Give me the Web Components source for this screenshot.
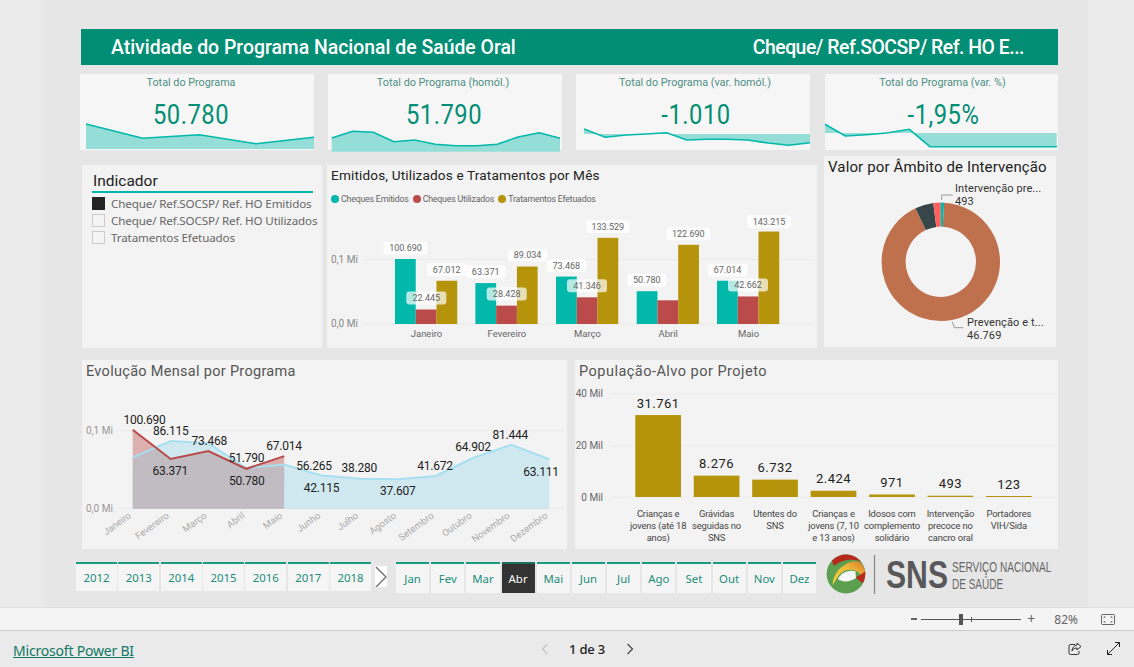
<!DOCTYPE html>
<html lang="pt">
<head>
<meta charset="utf-8">
<title>Atividade do Programa Nacional de Saúde Oral</title>
<style>
    html, body { margin: 0; height: 100%; }
    body { display: flex; flex-direction: column; height: 667px; overflow: hidden; background: #eaeaea;
        font-family: "Noto Sans", "Liberation Sans", sans-serif; }
    .row-kpi { display: grid; grid-template-columns: repeat(4, 234px); gap: 14px; margin-top: 9px; }
    .row-mid { display: grid; grid-template-columns: 240px 490px 234px; column-gap: 5px; margin: 6px 0 0 2px; height: 192px; }
    .row-mid donut-chart { margin-left: 2px; }
    .row-low { display: grid; grid-template-columns: 485px 483px; gap: 8px; margin: 12px 0 0 2px; height: 189px; }
    .row-tiles { display: flex; align-items: flex-start; margin: 12px 0 0 -4px; }
</style>
</head>
<body>
<report-canvas>
    <report-header>
        <span>Atividade do Programa Nacional de Saúde Oral</span>
        <span slot="right">Cheque/ Ref.SOCSP/ Ref. HO E...</span>
    </report-header>
    <div class="row-kpi">
        <kpi-card label="Total do Programa" value="50.780" view="80 74 234 76" style="--lx:-6px;--vx:-6px"
            line="86,124 142.7,138.3 199.3,134.7 256,143.7 314,137.3"
            area="86,124 142.7,138.3 199.3,134.7 256,143.7 314,137.3 314,149 86,149"></kpi-card>
        <kpi-card label="Total do Programa (homól.)" value="51.790" view="328 74 234 76" style="--lx:-2px;--vx:-1px"
            line="331.7,138 352.7,131.3 373.3,132.3 394,141.7 414.7,140 435.3,144.3 456,145.7 476.7,145.7 497.3,144.3 518,137 539.3,132.7 560,138.3"
            area="331.7,138 352.7,131.3 373.3,132.3 394,141.7 414.7,140 435.3,144.3 456,145.7 476.7,145.7 497.3,144.3 518,137 539.3,132.7 560,138.3 560,151.7 331.7,151.7"></kpi-card>
        <kpi-card label="Total do Programa (var. homól.)" value="-1.010" view="576 74 234 76" style="--lx:2px;--vx:3px"
            line="584,129 605.3,137.3 626,135 646,134 666.7,132.7 686.7,140 706.7,139.3 726.7,139.3 747.3,140 768,143 788.7,145.3 810,142.7"
            area="584,129 605.3,137.3 626,135 646,134 666.7,132.7 686.7,140 706.7,139.3 726.7,139.3 747.3,140 768,143 788.7,145.3 810,142.7 810,134 584,134"></kpi-card>
        <kpi-card label="Total do Programa (var. %)" value="-1,95%" view="825 74 233 76" style="--lx:1px;--vx:2px;margin-left:1px"
            line="825,124.3 845.3,136 866,134.7 886.7,133 909.3,129.3 930,146.7 1057,146.7"
            area="825,124.3 845.3,136 866,134.7 886.7,133 909.3,129.3 930,146.7 1056.7,146.7 1056.7,133 825,133"></kpi-card>
    </div>
    <div class="row-mid">
        <indicator-slicer>
            <span slot="title">Indicador</span>
            <slicer-item checked>Cheque/ Ref.SOCSP/ Ref. HO Emitidos</slicer-item>
            <slicer-item>Cheque/ Ref.SOCSP/ Ref. HO Utilizados</slicer-item>
            <slicer-item>Tratamentos Efetuados</slicer-item>
        </indicator-slicer>
        <month-bars>Emitidos, Utilizados e Tratamentos por Mês</month-bars>
        <donut-chart>Valor por Âmbito de Intervenção</donut-chart>
    </div>
    <div class="row-low">
        <evolution-chart>Evolução Mensal por Programa</evolution-chart>
        <project-bars>População-Alvo por Projeto</project-bars>
    </div>
    <div class="row-tiles">
        <tile-slicer items="2012,2013,2014,2015,2016,2017,2018" style="--w:295px;--h:29px"></tile-slicer>
        <more-arrow></more-arrow>
        <tile-slicer items="Jan,Fev,Mar,Abr,Mai,Jun,Jul,Ago,Set,Out,Nov,Dez" selected="Abr" style="--w:420px;--h:31px;--gap:2px"></tile-slicer>
        <sns-logo></sns-logo>
    </div>
</report-canvas>
<zoom-bar></zoom-bar>
<report-footer></report-footer>

<script>
const DIN = 'Roboto, "Liberation Sans", sans-serif';

class BaseElement extends HTMLElement {
    constructor() {
        super();
        this.attachShadow({mode: "open"});
    }
    connectedCallback() {
        this.render();
    }
    getMarkup() { return ""; }
    getStyles() { return ""; }
    getTemplate() {
        const template = document.createElement("template");
        template.innerHTML = `<style>${this.getStyles()}</style>${this.getMarkup()}`;
        return template;
    }
    render() {
        this.shadowRoot.appendChild(this.getTemplate().content.cloneNode(true));
    }
}

class ReportCanvas extends BaseElement {
    getStyles() {
        return `:host{display:block;box-sizing:border-box;width:1043px;height:607px;margin-left:45px;
            padding:29px 30px 0 35px;background:#e6e6e6}`;
    }
    getMarkup() { return `<slot></slot>`; }
}

class ReportHeader extends BaseElement {
    getStyles() {
        return `:host{display:flex;justify-content:space-between;align-items:center;box-sizing:border-box;height:36px;
            margin-left:1px;padding:0 34px 0 30px;background:#018e74;color:#fff;font:500 19.4px ${DIN}}
            ::slotted(*){white-space:nowrap}
            ::slotted([slot=right]){letter-spacing:-.48px}`;
    }
    getMarkup() { return `<slot></slot><slot name="right"></slot>`; }
}

class KpiCard extends BaseElement {
    getStyles() {
        return `:host{display:block;position:relative;height:76px;background:#f6f6f6;text-align:center;font-family:${DIN}}
            .label{padding-top:1px;line-height:16px;font-size:10.8px;color:#4d8f84;transform:translateX(var(--lx,0))}
            .value{margin-top:9px;line-height:30px;font-size:27px;letter-spacing:.6px;color:#018e74;transform:translateX(var(--vx,0)) scaleX(.88)}
            svg{position:absolute;inset:0;width:100%;height:100%;overflow:visible}`;
    }
    getMarkup() {
        const view = this.getAttribute("view");
        const [, , w, h] = view.split(" ");
        return `<svg viewBox="${view}" width="${w}" height="${h}">
                <polygon points="${this.getAttribute("area")}" fill="#95ded7"/>
                <polyline points="${this.getAttribute("line")}" fill="none" stroke="#01b8aa" stroke-width="1.6"/>
            </svg>
            <div class="label">${this.getAttribute("label")}</div>
            <div class="value">${this.getAttribute("value")}</div>`;
    }
}

class IndicatorSlicer extends BaseElement {
    getStyles() {
        return `:host{display:block;box-sizing:border-box;height:183px;margin-top:9px;padding:7px 10px 0 10px;background:#f3f3f3}
            h2{margin:0 0 2px;width:220px;padding-left:1px;height:19px;line-height:19px;font:400 15.5px ${DIN};color:#222;border-bottom:2px solid #01b8aa}`;
    }
    getMarkup() { return `<h2><slot name="title"></slot></h2><slot></slot>`; }
}

class SlicerItem extends BaseElement {
    getStyles() {
        return `:host{display:flex;align-items:center;gap:6px;height:17px;white-space:nowrap;
            font-family:"Noto Sans","Liberation Sans",sans-serif;font-size:11.6px;letter-spacing:-.12px;color:#666}
            i{box-sizing:border-box;flex:none;width:13px;height:13px;border:1px solid #ccc}
            :host([checked]) i{background:#252423;border-color:#252423}`;
    }
    getMarkup() { return `<i></i><span><slot></slot></span>`; }
}

class ChartPanel extends BaseElement {
    getBaseStyles() {
        return `:host{display:block;box-sizing:border-box;background:#f3f3f3;font-family:${DIN};min-width:0}
            h2{margin:0;height:22px;padding-left:4px;font:400 14.5px/22px ${DIN};letter-spacing:.25px;color:#444;white-space:nowrap}
            svg{display:block;overflow:visible}
            text{font-family:${DIN}}`;
    }
    getStyles() { return this.getBaseStyles(); }
}

class MonthBars extends ChartPanel {
    getStyles() {
        return this.getBaseStyles() + `:host{height:183px;margin-top:9px}
            h2{color:#222;font-size:13.6px;letter-spacing:.15px;line-height:20px}
            .legend{display:flex;gap:4px;height:24px;align-items:center;padding-left:4px;font-size:8.8px;letter-spacing:-.2px;color:#666}
            .legend span{display:flex;align-items:center;gap:2px}
            .legend i{width:8px;height:8px;border-radius:50%}
            .axis{font-size:10px;fill:#888}
            .cat{font-size:9.5px;fill:#666;text-anchor:middle}
            .val{font-size:9px;fill:#666;text-anchor:middle;dominant-baseline:central}`;
    }
    getMarkup() {
        const base = 324, k = 0.0006455;
        const starts = [395, 475.4, 556, 636.7, 717];
        const data = [[100690, 22445, 67012], [63371, 28428, 89034], [73468, 41346, 133529], [50780, 36700, 122690], [67014, 42662, 143215]];
        const colors = ["#01b8aa", "#bb4a4a", "#b5940b"];
        const cats = ["Janeiro", "Fevereiro", "Março", "Abril", "Maio"];
        const pills = [["100.690",405.5,248],["67.012",446.7,269.7],["22.445",426.3,298],["63.371",485.7,271.8],["28.428",506.7,294],
            ["89.034",527.5,255],["73.468",566.3,265.5],["41.346",587,285.8],["133.529",607.8,226.5],["50.780",646.8,280],
            ["122.690",688.3,233.7],["67.014",727.5,270],["42.662",748,285],["143.215",769,221.7]];
        let bars = "";
        data.forEach((group, g) => group.forEach((v, i) => {
            const h = v * k;
            bars += `<rect x="${starts[g] + i * 20.75}" y="${base - h}" width="20.75" height="${h}" fill="${colors[i]}"/>`;
        }));
        const labels = pills.map(([t, x, y]) => {
            const w = t.length > 6 ? 44 : 40;
            return `<rect x="${x - w / 2}" y="${y - 6.5}" width="${w}" height="13" rx="3" fill="#fff" fill-opacity=".7"/>
                <text class="val" x="${x}" y="${y}">${t}</text>`;
        }).join("");
        return `<h2><slot></slot></h2>
            <div class="legend">
                <span><i style="background:#01b8aa"></i>Cheques Emitidos</span>
                <span><i style="background:#bb4a4a"></i>Cheques Utilizados</span>
                <span><i style="background:#b5940b"></i>Tratamentos Efetuados</span>
            </div>
            <svg viewBox="327 211 490 137" width="490" height="137">
                <path d="M363 259.3H813M363 324H813" stroke="#e9e9e9"/>
                <text class="axis" x="331" y="262.5">0,1 Mi</text>
                <text class="axis" x="331" y="327">0,0 Mi</text>
                ${bars}${labels}
                ${cats.map((c, i) => `<text class="cat" x="${starts[i] + 31.5}" y="336.5">${c}</text>`).join("")}
            </svg>`;
    }
}

class DonutChart extends ChartPanel {
    getStyles() {
        return this.getBaseStyles() + `:host{height:191px}
            h2{color:#222;font-size:15px;letter-spacing:.13px}
            .lab{font-size:11px;fill:#333;letter-spacing:.1px}`;
    }
    arc(a0, a1, color) {
        const cx = 940.8, cy = 261.8, r = 47.2;
        const pt = a => {
            const t = (a - 90) * Math.PI / 180;
            return `${(cx + r * Math.cos(t)).toFixed(2)} ${(cy + r * Math.sin(t)).toFixed(2)}`;
        };
        return `<path d="M${pt(a0)}A${r} ${r} 0 ${a1 - a0 > 180 ? 1 : 0} 1 ${pt(a1)}" fill="none" stroke="${color}" stroke-width="24"/>`;
    }
    getMarkup() {
        return `<h2><slot></slot></h2>
            <svg viewBox="824 178 234 169" width="234" height="169">
                ${this.arc(3.2, 334.7, "#bf714d")}${this.arc(334.7, 352.7, "#374649")}
                ${this.arc(352.7, 360, "#fd625e")}${this.arc(0, 3.2, "#01b8aa")}
                <path d="M941.7 200V195H952.7M952.3 321.7L954.3 327.7H963.3" fill="none" stroke="#999"/>
                <text class="lab" x="955" y="192">Intervenção pre...</text>
                <text class="lab" x="955" y="205">493</text>
                <text class="lab" x="967" y="326">Prevenção e t...</text>
                <text class="lab" x="967" y="339">46.769</text>
            </svg>`;
    }
}

class EvolutionChart extends ChartPanel {
    getStyles() {
        return this.getBaseStyles() + `:host{height:189px}
            h2{line-height:23px;letter-spacing:.3px;color:#555}
            .axis{font-size:10px;fill:#999}
            .val{font-size:12px;fill:#222;text-anchor:middle;dominant-baseline:central;letter-spacing:-.25px}
            .cat{font-size:9.5px;fill:#aaa;text-anchor:end}`;
    }
    getMarkup() {
        const base = 508.7, k = 0.000785;
        const px = i => 132.7 + 37.87 * i;
        const py = v => base - v * k;
        const red = [100690, 63371, 73468, 50780, 67014];
        const blue = [65500, 86115, 83300, 51790, 56265, 42115, 38280, 37607, 41672, 64902, 81444, 63111];
        const line = arr => arr.map((v, i) => `${px(i).toFixed(1)},${py(v).toFixed(1)}`).join(" ");
        const area = arr => `${line(arr)} ${px(arr.length - 1)},${base} ${px(0)},${base}`;
        const months = ["Janeiro","Fevereiro","Março","Abril","Maio","Junho","Julho","Agosto","Setembro","Outubro","Novembro","Dezembro"];
        const vals = [["100.690",144.5,420],["86.115",170.7,431],["73.468",209.3,441],["51.790",246.5,458],["67.014",284,446],
            ["63.371",170.3,471],["50.780",246.7,481],["56.265",314,465.7],["42.115",321.5,488],["38.280",359.3,467.7],
            ["37.607",397.7,491],["41.672",435,466],["64.902",473,447],["81.444",510.3,435.3],["63.111",541,472]];
        return `<h2><slot></slot></h2>
            <svg viewBox="82 382 485 167" width="485" height="167">
                <path d="M116 430.7H563M116 508.7H563" stroke="#ececec"/>
                <text class="axis" x="86" y="434">0,1 Mi</text>
                <text class="axis" x="86" y="512">0,0 Mi</text>
                <polygon points="${area(red)}" fill="#b94a48" fill-opacity=".4"/>
                <polygon points="${area(blue)}" fill="#8ad4eb" fill-opacity=".33"/>
                <polyline points="${line(blue)}" fill="none" stroke="#a8dff0" stroke-width="2"/>
                <polyline points="${line(red)}" fill="none" stroke="#b94a48" stroke-width="2"/>
                ${vals.map(([t, x, y]) => `<text class="val" x="${x}" y="${y}">${t}</text>`).join("")}
                ${months.map((m, i) => `<text class="cat" transform="translate(${px(i) - 1} 517) rotate(-36)">${m}</text>`).join("")}
            </svg>`;
    }
}

class ProjectBars extends ChartPanel {
    getStyles() {
        return this.getBaseStyles() + `:host{height:189px}
            h2{line-height:23px;letter-spacing:.48px;color:#555}
            .axis{font-size:10px;fill:#666;text-anchor:end}
            .val{font-size:13px;fill:#222;text-anchor:middle;dominant-baseline:central;letter-spacing:.5px}
            .cat{font-size:9.4px;fill:#444;text-anchor:middle;letter-spacing:-.15px}`;
    }
    getMarkup() {
        const data = [
            [31761, "31.761", ["Crianças e", "jovens (até 18", "anos)"]],
            [8276, "8.276", ["Grávidas", "seguidas no", "SNS"]],
            [6732, "6.732", ["Utentes do", "SNS"]],
            [2424, "2.424", ["Crianças e", "jovens (7, 10", "e 13 anos)"]],
            [971, "971", ["Idosos com", "complemento", "solidário"]],
            [493, "493", ["Intervenção", "precoce no", "cancro oral"]],
            [123, "123", ["Portadores", "VIH/Sida"]]
        ];
        const base = 497, k = 0.00258;
        const cols = data.map(([v, t, lines], i) => {
            const x = 635.3 + i * 58.45, h = Math.max(v * k, 1), cx = x + 22.85;
            return `<rect x="${x}" y="${base - h}" width="45.7" height="${h}" fill="#b5940b"/>
                <text class="val" x="${cx}" y="${base - h - 12}">${t}</text>
                ${lines.map((l, n) => `<text class="cat" x="${cx}" y="${516.5 + n * 12}">${l}</text>`).join("")}`;
        }).join("");
        return `<h2><slot></slot></h2>
            <svg viewBox="575 382 483 167" width="483" height="167">
                <path d="M612 394H1056M612 445.5H1056M612 497.3H1056" stroke="#ececec"/>
                <text class="axis" x="603" y="397">40 Mil</text>
                <text class="axis" x="603" y="448.5">20 Mil</text>
                <text class="axis" x="603" y="500.5">0 Mil</text>
                ${cols}
            </svg>`;
    }
}

class TileSlicer extends BaseElement {
    getStyles() {
        return `:host{display:flex;flex:none;gap:var(--gap,1.3px);width:var(--w);margin-top:1px}
            button{all:unset;flex:1;box-sizing:border-box;height:var(--h);border-top:2px solid #1a9b82;background:#f5f5f5;
                text-align:center;font:11.4px "Noto Sans","Liberation Sans",sans-serif;color:#208c7a}
            button.on{background:#333;color:#fff;border-top-color:#17705f}`;
    }
    getMarkup() {
        const sel = this.getAttribute("selected");
        return this.getAttribute("items").split(",")
            .map(t => `<button class="${t === sel ? "on" : ""}">${t}</button>`).join("");
    }
}

class MoreArrow extends BaseElement {
    getStyles() {
        return `:host{display:block;flex:none;width:12px;height:21px;margin:5px 9px 0 4px;background:#fff}
            svg{display:block}`;
    }
    getMarkup() {
        return `<svg width="12" height="21" viewBox="0 0 12 21"><path d="M1 1L11 11L1 21" fill="none" stroke="#777" stroke-width="1.5"/></svg>`;
    }
}

class SnsLogo extends BaseElement {
    getStyles() {
        return `:host{display:block;flex:none;margin:-8px 0 0 10px}
            svg{display:block;overflow:visible}
            text{font-family:"Liberation Sans",sans-serif}`;
    }
    getMarkup() {
        return `<svg width="230" height="44" viewBox="826 553 230 44">
            <defs><linearGradient id="g" x1="0" y1="1" x2="1" y2="0">
                <stop offset="0" stop-color="#efd23e"/><stop offset=".6" stop-color="#eeb93a"/><stop offset="1" stop-color="#d9772a"/>
            </linearGradient></defs>
            <g transform="translate(826.6 554.6) scale(.3345) translate(-20 -30)">
                <circle cx="78" cy="88" r="58" fill="#5b9f4f"/>
                <path d="M36 48A58 58 0 0 1 124 52C105 42 70 42 42 64Z" fill="#b8291c"/>
                <path d="M38 122C38 90 60 60 100 50C115 48 128 56 134 74C136 82 136 92 132 104L118 86C105 70 75 72 60 88C52 96 46 110 38 122Z" fill="url(#g)"/>
                <path d="M135 80A58 58 0 0 1 128 116L106 98C114 96 124 90 135 80Z" fill="#b8291c"/>
                <path d="M54 104C60 86 84 74 106 80L108 100C90 112 70 114 54 104Z" fill="#f6f6f6"/>
            </g>
            <path d="M874.5 555V594" stroke="#888" stroke-width="1.2"/>
            <text transform="translate(886 588) scale(.794 1)" font-size="38" font-weight="700" fill="#58585a">SNS</text>
            <text transform="translate(952 572) scale(.72 1)" font-size="14" fill="#666">SERVIÇO NACIONAL</text>
            <text transform="translate(952 589) scale(.715 1)" font-size="14" fill="#666">DE SAÚDE</text>
        </svg>`;
    }
}

class ZoomBar extends BaseElement {
    getStyles() {
        return `:host{display:flex;align-items:center;box-sizing:border-box;height:24px;padding-right:19px;background:#f4f4f4;
            border-top:1px solid #e0e0e0;border-bottom:1px solid #ccc;font:12px "Noto Sans","Liberation Sans",sans-serif;color:#666}
            .minus{margin-left:auto;width:6px;height:2px;background:#666}
            .track{position:relative;width:100px;height:1px;margin:0 5px 0 4px;background:#555}
            .thumb{position:absolute;left:38px;top:-5px;width:4px;height:11px;background:#555}
            .tick{position:absolute;left:50px;top:-2px;width:1px;height:5px;background:#555}
            .plus{width:10px;line-height:1;font-size:14px;text-align:center}
            .pct{margin:0 23px 0 18px}
            svg{display:block}`;
    }
    getMarkup() {
        return `<div class="minus"></div>
            <div class="track"><div class="thumb"></div><div class="tick"></div></div>
            <div class="plus">+</div>
            <div class="pct">82%</div>
            <svg width="14" height="11" viewBox="0 0 14 11" fill="none" stroke="#666">
                <rect x=".5" y=".5" width="13" height="10" rx="1"/>
                <path d="M3 4V3H4.5M11 4V3H9.5M3 7V8H4.5M11 7V8H9.5"/>
            </svg>`;
    }
}

class ReportFooter extends BaseElement {
    getStyles() {
        return `:host{display:flex;align-items:center;flex:1;padding:0 14px 0 13px;background:#eaeaea;
            font-family:"Noto Sans","Liberation Sans",sans-serif}
            a{width:120px;padding-top:3px;font-size:14px;letter-spacing:-.2px;color:#117865;text-decoration:underline;white-space:nowrap}
            .pager{display:flex;align-items:center;margin-left:407px;font-size:13px;color:#222}
            .pager span{margin:0 20px 0 19px;letter-spacing:-.2px;font-weight:500}
            .icons{display:flex;gap:25px;margin-left:auto}
            svg{display:block}`;
    }
    getMarkup() {
        return `<a href="#">Microsoft Power BI</a>
            <div class="pager">
                <svg width="10" height="12" viewBox="0 0 10 12"><path d="M7.5 1L2.5 6L7.5 11" fill="none" stroke="#c4c4c4" stroke-width="1.2"/></svg>
                <span>1 de 3</span>
                <svg width="10" height="12" viewBox="0 0 10 12"><path d="M2.5 1L7.5 6L2.5 11" fill="none" stroke="#444" stroke-width="1.2"/></svg>
            </div>
            <div class="icons">
                <svg width="14" height="14" viewBox="0 0 14 14" fill="none" stroke="#333">
                    <path d="M7 2.5H2.5Q1 2.5 1 4V11Q1 12.5 2.5 12.5H9.5Q11 12.5 11 11V9"/>
                    <path d="M9 1L13 4.5L9 8V6C6.5 6 5 7 4 9C4 6 6 3.5 9 3Z"/>
                </svg>
                <svg width="13" height="13" viewBox="0 0 13 13" fill="none" stroke="#222">
                    <path d="M8 .5H12.5V5M12.5 .5L.5 12.5M.5 8V12.5H5"/>
                </svg>
            </div>`;
    }
}

customElements.define("report-canvas", ReportCanvas);
customElements.define("report-header", ReportHeader);
customElements.define("kpi-card", KpiCard);
customElements.define("indicator-slicer", IndicatorSlicer);
customElements.define("slicer-item", SlicerItem);
customElements.define("month-bars", MonthBars);
customElements.define("donut-chart", DonutChart);
customElements.define("evolution-chart", EvolutionChart);
customElements.define("project-bars", ProjectBars);
customElements.define("tile-slicer", TileSlicer);
customElements.define("more-arrow", MoreArrow);
customElements.define("sns-logo", SnsLogo);
customElements.define("zoom-bar", ZoomBar);
customElements.define("report-footer", ReportFooter);
</script>
</body>
</html>
